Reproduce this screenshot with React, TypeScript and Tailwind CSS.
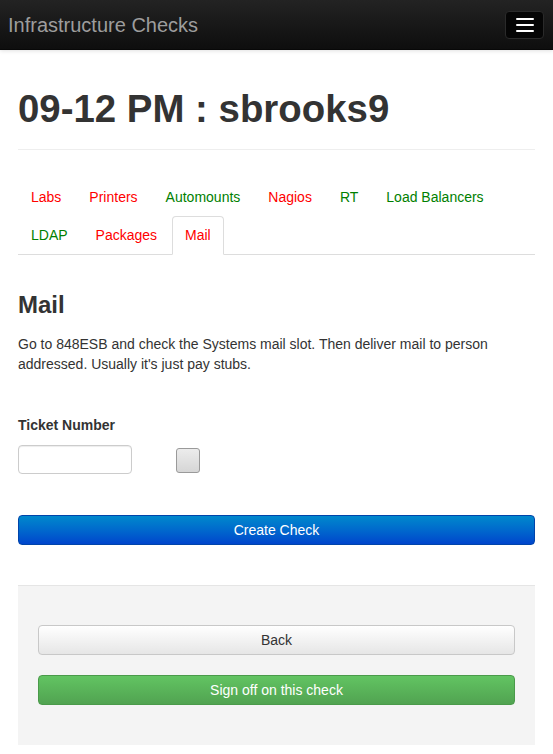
import React from "react";

const tabs: { label: string; color: string; active?: boolean }[] = [
  { label: "Labs", color: "text-[#ff0000]" },
  { label: "Printers", color: "text-[#ff0000]" },
  { label: "Automounts", color: "text-[#008000]" },
  { label: "Nagios", color: "text-[#ff0000]" },
  { label: "RT", color: "text-[#008000]" },
  { label: "Load Balancers", color: "text-[#008000]" },
  { label: "LDAP", color: "text-[#008000]" },
  { label: "Packages", color: "text-[#ff0000]" },
  { label: "Mail", color: "text-[#ff0000]", active: true },
];

export default function App() {
  return (
    <div
      className="min-h-[754px] bg-white text-[#333] text-[14px] leading-[20px]"
      style={{ fontFamily: '"Liberation Sans", Arial, Helvetica, sans-serif' }}
    >
      <nav className="h-[50px] flex items-center justify-between pl-[8px] pr-[9px] bg-gradient-to-b from-[#232323] to-[#0e0e0e] border-b border-[#080808] shadow-[0_1px_4px_rgba(0,0,0,0.12)]">
        <span className="text-[20px] leading-[24px] text-[#9d9d9d]">Infrastructure Checks</span>
        <button className="w-[39px] h-[28px] rounded-[4px] bg-[#050505] border border-[#2a2a2a] flex flex-col items-center justify-center gap-[4px]">
          <span className="block w-[18px] h-[2px] bg-white rounded-[1px]" />
          <span className="block w-[18px] h-[2px] bg-white rounded-[1px]" />
          <span className="block w-[18px] h-[2px] bg-white rounded-[1px]" />
        </button>
      </nav>

      <main className="px-[18px]">
        <div className="pt-[38px] pb-[19px] border-b border-[#eee]">
          <h1 className="text-[38.4px] leading-[42px] font-bold text-[#333]">09-12 PM : sbrooks9</h1>
        </div>

        <ul className="mt-[28px] flex flex-wrap border-b border-[#ddd]">
          {tabs.map((t) => (
            <li key={t.label} className="-mb-px">
              <a
                className={`block mr-[2px] px-[12px] py-[9px] leading-[19px] rounded-t-[4px] border ${
                  t.active ? "border-[#ddd] border-b-transparent bg-white" : "border-transparent"
                } ${t.color}`}
              >
                {t.label}
              </a>
            </li>
          ))}
        </ul>

        <h3 className="mt-[37px] text-[24px] leading-[26px] font-bold text-[#333]">Mail</h3>
        <p className="mt-[16px] pr-[40px]">
          Go to 848ESB and check the Systems mail slot. Then deliver mail to person addressed. Usually it's just pay stubs.
        </p>

        <label className="block mt-[41px] font-bold">Ticket Number</label>
        <div className="mt-[10px] flex items-start">
          <input
            type="text"
            className="w-[114px] h-[29px] border border-[#ccc] rounded-[4px] bg-white shadow-[inset_0_1px_1px_rgba(0,0,0,0.075)] outline-none px-2"
          />
          <span className="ml-[44px] mt-[3px] w-[24px] h-[25px] rounded-[3px] border border-[#9a9a9a] bg-gradient-to-b from-[#ececec] to-[#d6d6d6]" />
        </div>

        <button className="mt-[41px] w-full h-[30px] rounded-[4px] border border-[#0044aa] bg-gradient-to-b from-[#0088cc] to-[#0044cc] text-white text-[14px]">
          Create Check
        </button>

        <div className="mt-[40px] border-t border-[#e5e5e5] bg-[#f4f4f4] px-[20px] pt-[39px] pb-[40px] flex flex-col gap-[20px]">
          <button className="w-full h-[30px] rounded-[4px] border border-[#c8c8c8] bg-gradient-to-b from-white to-[#e6e6e6] text-[#333] text-[14px]">
            Back
          </button>
          <button className="w-full h-[30px] rounded-[4px] border border-[#4a9a4a] bg-gradient-to-b from-[#62c462] to-[#51a351] text-white text-[14px]">
            Sign off on this check
          </button>
        </div>
      </main>
    </div>
  );
}
